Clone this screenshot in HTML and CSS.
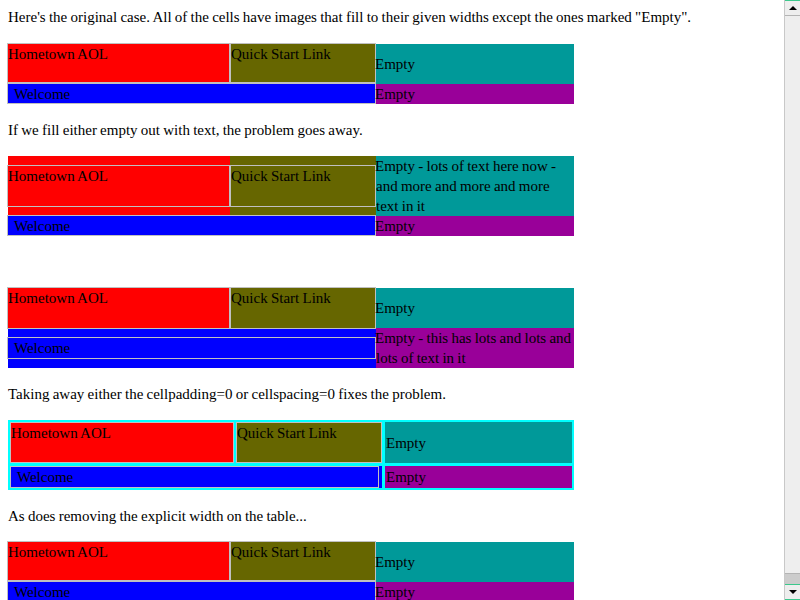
FILE: index.html
```html
<!DOCTYPE html>
<html>
<head>
<meta charset="utf-8">
<title>Table cell width test</title>
<link rel="stylesheet" href="styles.css">
</head>
<body>
<p class="note first">Here's the original case. All of the cells have images that fill to their given widths except the ones marked "Empty".</p>
<div class="grid g1 gap17">
  <div class="box red lead top">Hometown AOL</div>
  <div class="box olive top">Quick Start Link</div>
  <div class="cell teal mid">Empty</div>
  <div class="box blue wide">Welcome</div>
  <div class="cell purple">Empty</div>
</div>

<p class="note">If we fill either empty out with text, the problem goes away.</p>
<div class="grid g2">
  <div class="cell red pad9"><div class="box red lead h42">Hometown AOL</div></div>
  <div class="cell olive pad9"><div class="box olive h42">Quick Start Link</div></div>
  <div class="cell teal">Empty - lots of text here now - and more and more and more text in it</div>
  <div class="box blue wide">Welcome</div>
  <div class="cell purple">Empty</div>
</div>

<div class="grid g3 gap52">
  <div class="box red lead top3">Hometown AOL</div>
  <div class="box olive top3">Quick Start Link</div>
  <div class="cell teal mid h40">Empty</div>
  <div class="cell blue span2 pad8"><div class="box blue lead h22 welcome">Welcome</div></div>
  <div class="cell purple up1 nowrap">Empty - this has lots and lots and<br>lots of text in it</div>
</div>

<p class="note">Taking away either the cellpadding=0 or cellspacing=0 fixes the problem.</p>
<div class="grid g4">
  <div class="box red">Hometown AOL</div>
  <div class="box olive mr1">Quick Start Link</div>
  <div class="cell teal mid4">Empty</div>
  <div class="cell blue span2 mr1"><div class="box blue fill welcome">Welcome</div></div>
  <div class="cell purple pad1">Empty</div>
</div>

<p class="note">As does removing the explicit width on the table...</p>
<div class="grid g1">
  <div class="box red lead top">Hometown AOL</div>
  <div class="box olive top">Quick Start Link</div>
  <div class="cell teal mid">Empty</div>
  <div class="box blue wide">Welcome</div>
  <div class="cell purple">Empty</div>
</div>

<div class="scrollbar" aria-hidden="true">
  <div class="sb-btn"><span class="arrow-up"></span></div>
  <div class="sb-track">
    <div class="sb-thumb"></div>
    <div class="sb-rest"></div>
  </div>
  <div class="sb-btn"><span class="arrow-down"></span></div>
</div>
</body>
</html>
```
FILE: styles.css
```css
html, body {
  background: #fff;
}
body {
  margin: 0;
  padding: 7px 8px 8px;
  font-family: "Liberation Serif", "Times New Roman", serif;
  font-size: 15px;
  word-spacing: -0.5px;
  line-height: 20px;
  color: #000;
}
.note {
  margin: 16px 0 0;
}
.note.first {
  margin-top: 0;
}
.grid {
  display: grid;
  width: 566px;
  grid-template-columns: 222px 146px 198px;
  margin-top: 16px;
}
.gap17 { margin-top: 17px; }
.gap52 { margin-top: 52px; }

.g1 { grid-template-rows: 40px 20px; }
.g2 { grid-template-rows: 60px 20px; }
.g3 { grid-template-rows: 41px 39px; }
.g4 {
  box-sizing: border-box;
  border: 2px solid #00ffff;
  background: #00ffff;
  grid-template-columns: 224px 147px 187px;
  grid-template-rows: 41px 22px;
  column-gap: 2px;
  row-gap: 3px;
}

.red { background: #ff0000; }
.olive { background: #666600; }
.teal { background: #009999; }
.blue { background: #0000ff; }
.purple { background: #990099; }

.box {
  box-sizing: border-box;
  border: 1px solid #c0c0c0;
  white-space: nowrap;
}
.cell {
  box-sizing: border-box;
}
.lead { margin-left: -1px; }
.top {
  margin-top: -1px;
  height: 40px;
  align-self: start;
}
.top3 { margin-top: -1px; }
.h42 { height: 42px; }
.h40 { height: 40px; align-self: start; }
.h22 { height: 22px; }
.pad9 { padding-top: 9px; }
.pad8 { padding-top: 8px; }
.pad1 { padding: 1px 0 0 1px; }
.mid { padding-top: 10px; }
.mid4 { padding: 11px 0 0 1px; }
.up1 { margin-top: -1px; }
.mr1 { margin-right: 1px; }
.nowrap { white-space: nowrap; }
.teal, .purple { text-indent: -1px; }
.g4 .teal, .g4 .purple { text-indent: 0; }

.wide {
  grid-column: 1 / span 2;
  margin: -1px 0 0 -1px;
  padding-left: 6px;
}
.span2 { grid-column: 1 / span 2; }
.welcome { padding-left: 6px; }
.fill {
  height: 22px;
  margin-right: 3px;
}

/* imitation of the classic window scrollbar on the right edge */
.scrollbar {
  position: fixed;
  top: 0;
  right: 0;
  width: 16px;
  height: 600px;
  display: flex;
  flex-direction: column;
  background: #eeeeee;
  border-left: 1px solid #c8c8c8;
  box-sizing: border-box;
}
.sb-btn {
  height: 16px;
  flex: none;
  display: flex;
  align-items: center;
  justify-content: center;
  background: #eeeeee;
  border-top: 1px solid #3cc88c;
  border-bottom: 1px solid #b4b4b4;
  box-sizing: border-box;
}
.sb-btn:last-child {
  border-top: 1px solid #3cc88c;
  border-bottom: 1px solid #3cc88c;
}
.sb-track {
  flex: 1;
  display: flex;
  flex-direction: column;
}
.sb-thumb {
  flex: 1;
  background: #eeeeee;
  border-bottom: 1px solid #b4b4b4;
}
.sb-rest {
  height: 10px;
  background: #cccccc;
}
.arrow-up {
  width: 0;
  height: 0;
  border-left: 4px solid transparent;
  border-right: 4px solid transparent;
  border-bottom: 4px solid #000;
}
.arrow-down {
  width: 0;
  height: 0;
  border-left: 4px solid transparent;
  border-right: 4px solid transparent;
  border-top: 4px solid #000;
}
```
